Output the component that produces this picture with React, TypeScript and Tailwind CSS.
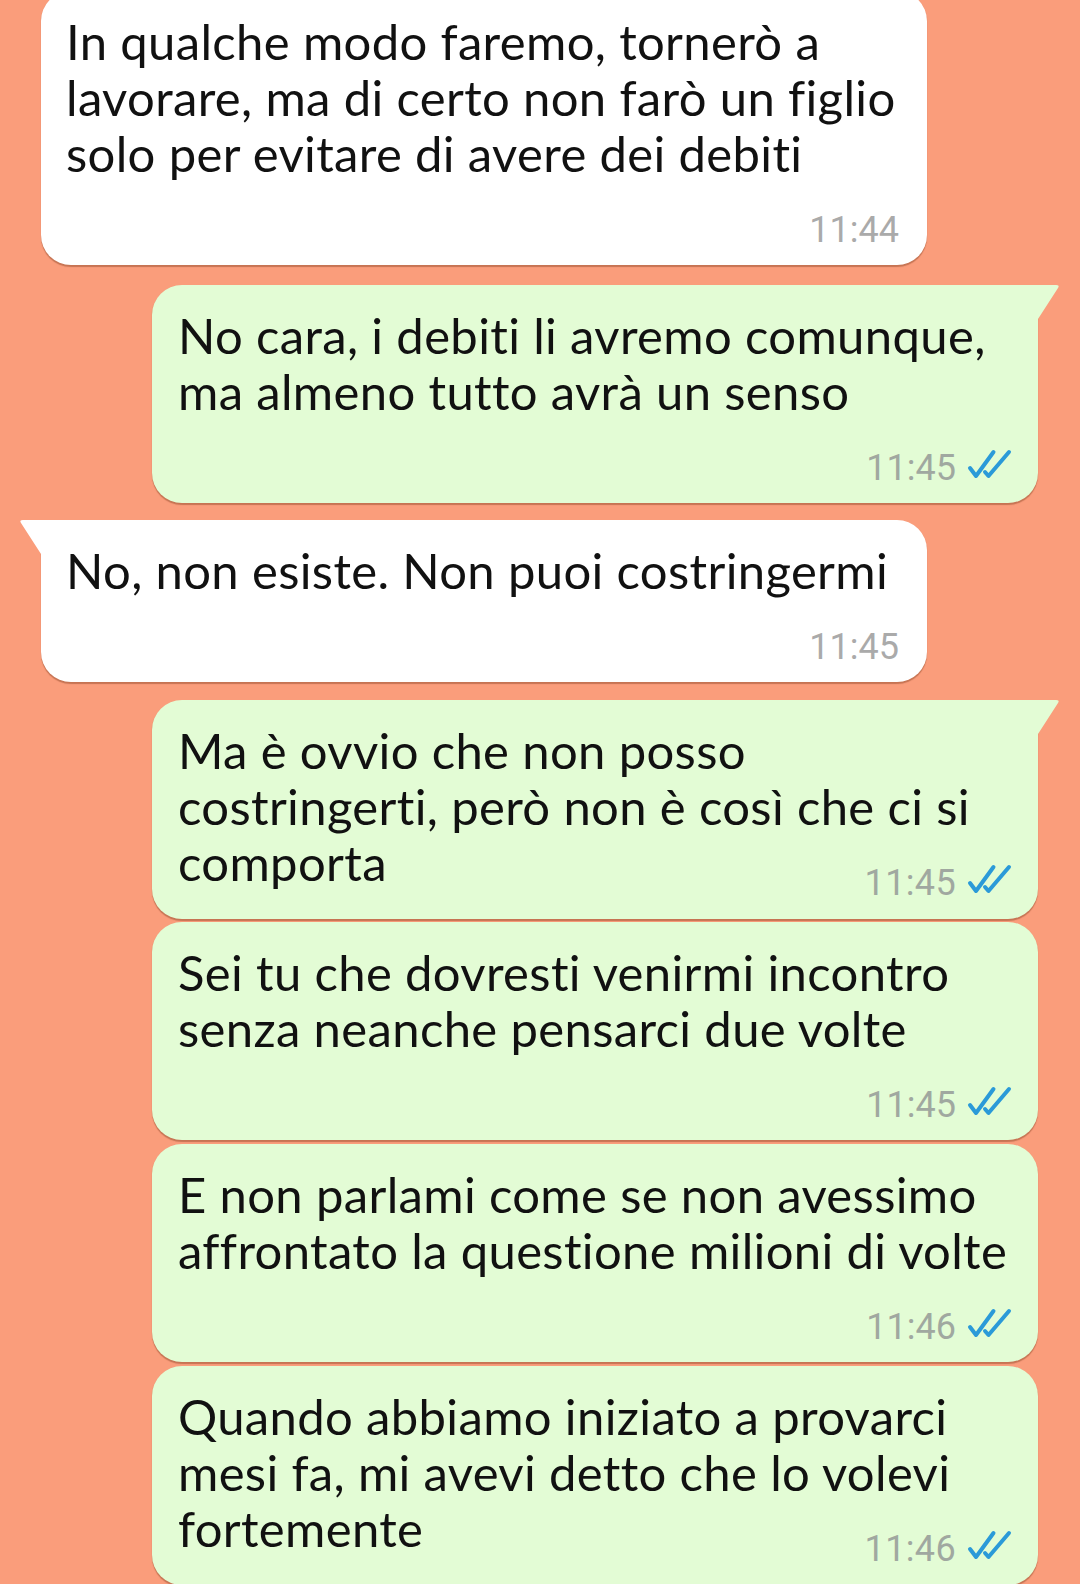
type Message = {
  id: number;
  side: 'in' | 'out';
  lines: string[];
  time: string;
  tail?: boolean;
  inlineTime?: boolean;
};

const messages: Message[] = [
  {
    id: 1,
    side: 'in',
    lines: [
      'In qualche modo faremo, tornerò a',
      'lavorare, ma di certo non farò un figlio',
      'solo per evitare di avere dei debiti',
    ],
    time: '11:44',
  },
  {
    id: 2,
    side: 'out',
    lines: ['No cara, i debiti li avremo comunque,', 'ma almeno tutto avrà un senso'],
    time: '11:45',
    tail: true,
  },
  {
    id: 3,
    side: 'in',
    lines: ['No, non esiste. Non puoi costringermi'],
    time: '11:45',
    tail: true,
  },
  {
    id: 4,
    side: 'out',
    lines: ['Ma è ovvio che non posso', 'costringerti, però non è così che ci si', 'comporta'],
    time: '11:45',
    tail: true,
    inlineTime: true,
  },
  {
    id: 5,
    side: 'out',
    lines: ['Sei tu che dovresti venirmi incontro', 'senza neanche pensarci due volte'],
    time: '11:45',
  },
  {
    id: 6,
    side: 'out',
    lines: ['E non parlami come se non avessimo', 'affrontato la questione milioni di volte'],
    time: '11:46',
  },
  {
    id: 7,
    side: 'out',
    lines: ['Quando abbiamo iniziato a provarci', 'mesi fa, mi avevi detto che lo volevi', 'fortemente'],
    time: '11:46',
    inlineTime: true,
  },
];

// vertical offset of each bubble from the previous one
const gaps: Record<number, string> = {
  1: 'mt-[-9px]',
  2: 'mt-[20px]',
  3: 'mt-[17px]',
  4: 'mt-[18px]',
  5: 'mt-[3px]',
  6: 'mt-[4px]',
  7: 'mt-[4px]',
};

function ReadTicks(): JSX.Element {
  return (
    <svg width="48" height="30" viewBox="0 0 48 30" className="mt-[1px] ml-[8px] shrink-0">
      <path d="M6 19 L12 27 L29.5 3" fill="none" stroke="#2b9ad8" strokeWidth="4" strokeLinecap="round" strokeLinejoin="round" />
      <path d="M21 23 L24.5 27 L45 3" fill="none" stroke="#2b9ad8" strokeWidth="4" strokeLinecap="round" strokeLinejoin="round" />
    </svg>
  );
}

function Stamp({ time, out }: Readonly<{ time: string; out: boolean }>): JSX.Element {
  return (
    <div className="flex h-[40px] items-start">
      <span
        className={
          out
            ? "font-['Roboto',sans-serif] text-[36px] leading-[40px] text-[#a0a8a0]"
            : "font-['Roboto',sans-serif] text-[36px] leading-[40px] text-[#aaaaaa]"
        }
      >
        {time}
      </span>
      {out ? <ReadTicks /> : null}
    </div>
  );
}

function Bubble({ message }: Readonly<{ message: Message }>): JSX.Element {
  const out = message.side === 'out';
  const body = message.inlineTime ? message.lines.slice(0, -1) : message.lines;
  const last = message.lines[message.lines.length - 1];

  return (
    <div className={`relative w-[886px] ${gaps[message.id]} ${out ? 'ml-[152px]' : 'ml-[41px]'}`}>
      {message.tail ? (
        out ? (
          <svg width="24" height="36" viewBox="0 0 24 36" className="absolute top-0 right-[-22px]">
            <path d="M0 0 L20 0 Q24 0 22 3 L2 34 L0 36 Z" fill="#e3fcd5" />
          </svg>
        ) : (
          <svg width="24" height="36" viewBox="0 0 24 36" className="absolute top-0 left-[-22px]">
            <path d="M24 0 L4 0 Q0 0 2 3 L22 34 L24 36 Z" fill="#ffffff" />
          </svg>
        )
      ) : null}
      <div
        className={`rounded-[30px] pt-[22px] shadow-[0_1.5px_1px_rgba(120,55,25,0.4)] ${
          out ? 'bg-[#e3fcd5] pl-[26px] pr-[26px]' : 'bg-white pl-[25px] pr-[28px]'
        } ${message.tail ? (out ? 'rounded-tr-none' : 'rounded-tl-none') : ''} ${
          message.inlineTime ? 'pb-[16px]' : 'pb-[15px]'
        }`}
      >
        <div className="font-['Lato',sans-serif] text-[49px] leading-[56px] tracking-[0.35px] text-[#111111]">
          {body.map((line) => (
            <div key={line} className="whitespace-nowrap">
              {line}
            </div>
          ))}
          {message.inlineTime ? (
            <div className="flex items-end justify-between">
              <div className="mb-[13px] whitespace-nowrap">{last}</div>
              <Stamp time={message.time} out={out} />
            </div>
          ) : null}
        </div>
        {message.inlineTime ? null : (
          <div className="mt-[29px] flex justify-end">
            <Stamp time={message.time} out={out} />
          </div>
        )}
      </div>
    </div>
  );
}

export default function App(): JSX.Element {
  return (
    <div className="h-[1584px] w-[1080px] overflow-hidden bg-[#fa9d7b]">
      {messages.map((message) => (
        <Bubble key={message.id} message={message} />
      ))}
    </div>
  );
}
